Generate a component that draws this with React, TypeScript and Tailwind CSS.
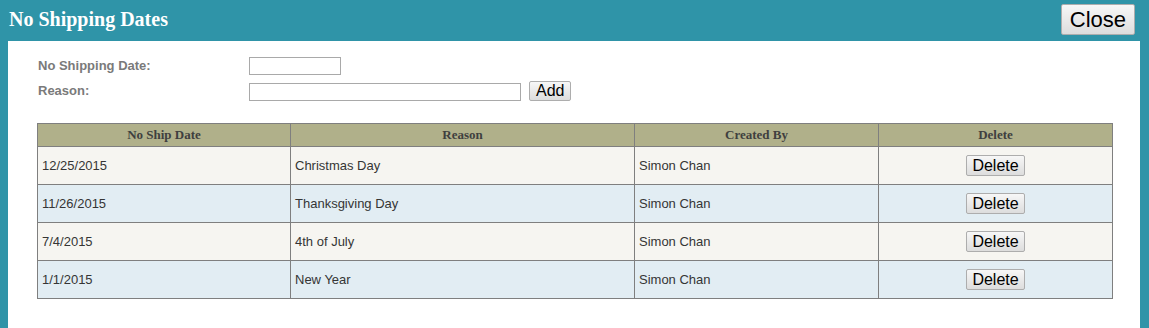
import React from "react";

type Row = { date: string; reason: string; createdBy: string };

const rows: Row[] = [
  { date: "12/25/2015", reason: "Christmas Day", createdBy: "Simon Chan" },
  { date: "11/26/2015", reason: "Thanksgiving Day", createdBy: "Simon Chan" },
  { date: "7/4/2015", reason: "4th of July", createdBy: "Simon Chan" },
  { date: "1/1/2015", reason: "New Year", createdBy: "Simon Chan" },
];

const btn =
  "border border-[#adadad] rounded-[2px] bg-gradient-to-b from-[#f7f7f7] to-[#dddddd] text-black font-['Liberation_Sans',Arial,sans-serif] leading-none";

export default function App() {
  return (
    <div className="h-[328px] w-full overflow-hidden bg-[#2f94a8]">
      <div className="flex h-[41px] items-start justify-between pl-[9px] pr-[14px]">
        <h1 className="pt-[8px] font-['Liberation_Serif','Times_New_Roman',serif] text-[20px] font-bold leading-[23px] text-white">
          No Shipping Dates
        </h1>
        <button type="button" className={`${btn} mt-[4px] h-[31px] px-[8px] text-[22px]`}>
          Close
        </button>
      </div>

      <div className="ml-[8px] mr-[9px] h-[287px] bg-white pl-[29px] pt-[16px]">
        <div className="grid grid-cols-[212px_auto] gap-y-[6px] font-['Liberation_Sans',Arial,sans-serif] text-[13px] font-bold text-[#7a7a7a]">
          <label className="flex h-[18px] items-center pl-[1px]">No Shipping Date:</label>
          <div className="flex items-center">
            <input type="text" className="h-[18px] w-[92px] border border-[#a9a9a9] bg-white outline-none" />
          </div>
          <label className="flex h-[20px] items-center pl-[1px]">Reason:</label>
          <div className="flex items-end gap-[8px]">
            <input type="text" className="h-[18px] w-[272px] border border-[#a9a9a9] bg-white outline-none" />
            <button type="button" className={`${btn} h-[20px] px-[6px] text-[16px] font-normal`}>
              Add
            </button>
          </div>
        </div>

        <table className="mt-[22px] w-[1075px] table-fixed border-collapse font-['Liberation_Sans',Arial,sans-serif] text-[13px] text-[#353535]">
          <colgroup>
            <col className="w-[253px]" />
            <col className="w-[344px]" />
            <col className="w-[244px]" />
            <col className="w-[234px]" />
          </colgroup>
          <thead>
            <tr className="h-[23px] bg-[#b0b08a] font-['Liberation_Serif','Times_New_Roman',serif] text-[13px] font-bold text-[#3f3f3f]">
              {["No Ship Date", "Reason", "Created By", "Delete"].map((h) => (
                <th key={h} className="border border-[#7f7f7f] p-0 text-center">
                  {h}
                </th>
              ))}
            </tr>
          </thead>
          <tbody>
            {rows.map((r, i) => (
              <tr key={r.date} className={`h-[38px] ${i % 2 === 0 ? "bg-[#f6f5f1]" : "bg-[#e2edf3]"}`}>
                <td className="border border-[#7f7f7f] py-0 pl-[4px]">{r.date}</td>
                <td className="border border-[#7f7f7f] py-0 pl-[4px]">{r.reason}</td>
                <td className="border border-[#7f7f7f] py-0 pl-[4px]">{r.createdBy}</td>
                <td className="border border-[#7f7f7f] p-0 text-center">
                  <button type="button" className={`${btn} h-[21px] px-[5px] text-[16px]`}>
                    Delete
                  </button>
                </td>
              </tr>
            ))}
          </tbody>
        </table>
      </div>
    </div>
  );
}
